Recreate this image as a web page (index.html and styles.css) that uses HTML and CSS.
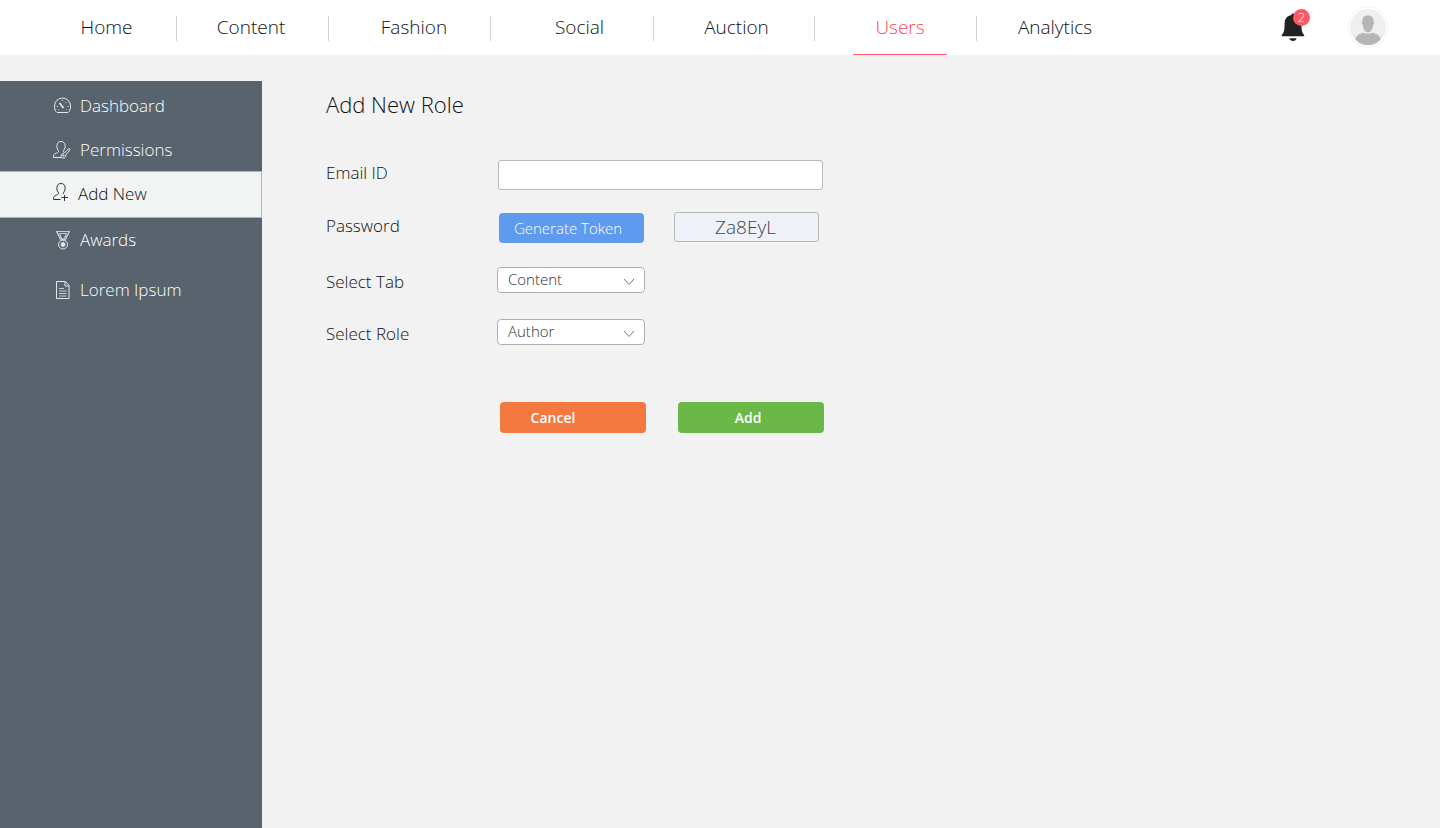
FILE: index.html
```html
<!DOCTYPE html>
<html lang="en">
<head>
<meta charset="utf-8">
<meta name="viewport" content="width=device-width, initial-scale=1">
<title>Add New Role</title>
<link rel="stylesheet" href="styles.css">
</head>
<body>
<header class="topbar">
  <nav class="tabs" aria-label="Main">
    <a class="tab" href="#"><span class="tab-label">Home</span></a>
    <a class="tab tab-back" href="#"><span class="tab-label">Content</span></a>
    <a class="tab tab-shifted" href="#"><span class="tab-label">Fashion</span></a>
    <a class="tab tab-wide" href="#"><span class="tab-label">Social</span></a>
    <a class="tab tab-near" href="#"><span class="tab-label">Auction</span></a>
    <a class="tab tab-shifted tab-active" href="#" aria-current="page"><span class="tab-label">Users</span></a>
    <a class="tab" href="#"><span class="tab-label">Analytics</span></a>
  </nav>
  <div class="account">
    <button class="bell" type="button" aria-label="Notifications">
      <svg width="24" height="30" viewBox="0 0 24 30" fill="#222" aria-hidden="true">
        <path d="M12 1.500c-1 0-1.600.700-1.600 1.600C6.200 3.900 3.600 7 3.600 11.500c0 7-.8 9.500-2.600 11.300-.5.600-.3 1.400.4 1.400h21.200c.7 0 .9-.8.4-1.400-1.800-1.800-2.600-4.300-2.600-11.300 0-4.500-2.600-7.600-6.800-8.400 0-.9-.6-1.600-1.600-1.600z"/>
        <path d="M8.500 26.200h7c-.3 1.700-1.600 2.700-3.500 2.700s-3.200-1-3.500-2.700z"/>
      </svg>
      <span class="badge">2</span>
    </button>
    <button class="avatar" type="button" aria-label="Account">
      <svg width="42" height="42" viewBox="0 0 42 42" aria-hidden="true">
        <circle cx="21" cy="21" r="20.200" fill="#fff" stroke="#f4f4f4"/>
        <circle cx="21" cy="21" r="18" fill="#efefef"/>
        <path d="M15.300 15.500c0-4 2-6 5.700-6s5.700 2 5.700 6c.7.300.4 2.500-.4 3-.5 4.700-2.400 8-5.300 8s-4.800-3.300-5.300-8c-.8-.5-1.100-2.700-.4-3z" fill="#b5b5b5"/>
        <path d="M8.500 33.200c.7-3.600 3.500-5.500 8.300-6.500 2.700 1.500 5.700 1.500 8.400 0 4.800 1 7.600 2.900 8.300 6.500-2.600 3.700-7.100 5.800-12.500 5.800s-9.900-2.100-12.500-5.800z" fill="#b5b5b5"/>
      </svg>
    </button>
  </div>
</header>
<div class="page">
  <aside class="sidebar">
    <a class="side-link" href="#">
      <svg class="side-icon" viewBox="0 0 20 20" aria-hidden="true"><path d="M5 17.500C3 16 2.500 14 2.500 11a8 8 0 0 1 16 0c0 3-.5 5-2.500 6.500z"/><path d="M7.500 8l4 5" stroke-width="1.800"/><path d="M10.500 4.500V6M4.500 11.500H6M15 11.500h1.500M14.500 7l-1 1M6 15l.8-.6M15 15l-.8-.6" stroke-width=".7"/></svg>
      Dashboard
    </a>
    <a class="side-link" href="#">
      <svg class="side-icon" viewBox="0 0 20 20" aria-hidden="true"><path d="M9.500 18.500H1.500c-.2-3 1-3.700 3-4.500 2-.7 2.500-1.500 1.700-2.800C5 9.700 4.800 8.500 4.900 6.500 5 4 6.500 2.500 9 2.500s4 1.500 4.100 4c.1 2-.3 3.300-1.300 4.700-.6 1-.5 1.700.3 2.300"/><path d="M12.300 14l4.200-4.200c.9-.8 2 .2 1.300 1.200L13.700 16c.3 2.200-1.200 3.200-3 3-1.400-.2-2-1.500-1.300-3 .5-1.300 1.500-1.800 2.900-2z"/><circle cx="11.400" cy="16.500" r=".7"/></svg>
      Permissions
    </a>
    <a class="side-link side-active" href="#" aria-current="page">
      <svg class="side-icon" viewBox="0 0 20 20" aria-hidden="true"><path d="M8.500 16.500H1.500c-.2-3 1-3.700 3-4.500 2-.7 2.500-1.500 1.700-2.800C5 7.700 4.800 6.500 4.900 4.500 5 2 6.500.5 9 .5s4 1.500 4.100 4c.1 2-.3 3.300-1.300 4.700-.5.800-.5 1.300-.3 1.800M12.500 12v6M9.500 14.500h6.500"/></svg>
      Add New
    </a>
    <a class="side-link side-awards" href="#">
      <svg class="side-icon" viewBox="0 0 20 20" aria-hidden="true"><path d="M4.500 1.500h13L13.500 10h-5zM7.500 3.500h7L12 9h-2zM4.500 1.500L10 10M17.500 1.500L12 10" stroke-width=".8"/><circle cx="11" cy="14.500" r="4.500"/><circle cx="11" cy="14.500" r="2" fill="currentColor"/></svg>
      Awards
    </a>
    <a class="side-link" href="#">
      <svg class="side-icon" viewBox="0 0 20 20" aria-hidden="true"><path d="M4.500 2.500h9l3.500 4v13H4.500zM13 2.500v4.500h4"/><path d="M7 9.500h5M7 12h7.500M7 14.500h7.500M7 17h7.500" stroke-width=".8"/></svg>
      Lorem Ipsum
    </a>
  </aside>
  <main class="content">
    <h1 class="title">Add New Role</h1>
    <form class="form">
      <div class="row">
        <label class="label label-raised" for="email">Email ID</label>
        <input class="text-box" id="email" type="email">
      </div>
      <div class="row">
        <label class="label label-raised" for="token">Password</label>
        <div class="pair">
          <button class="button button-token" type="button">Generate Token</button>
          <input class="text-box token" id="token" type="text" value="Za8EyL" readonly>
        </div>
      </div>
      <div class="row row-select">
        <label class="label label-lowered" for="tab">Select Tab</label>
        <div class="select">
          <select class="select-box" id="tab"><option>Content</option></select>
          <svg class="chevron" viewBox="0 0 12 8" aria-hidden="true"><path d="M1 1l5 5.500L11 1"/></svg>
        </div>
      </div>
      <div class="row row-select">
        <label class="label label-lowered" for="role">Select Role</label>
        <div class="select">
          <select class="select-box" id="role"><option>Author</option></select>
          <svg class="chevron" viewBox="0 0 12 8" aria-hidden="true"><path d="M1 1l5 5.500L11 1"/></svg>
        </div>
      </div>
      <div class="actions">
        <button class="button button-cancel" type="button">Cancel</button>
        <button class="button button-add" type="submit">Add</button>
      </div>
    </form>
  </main>
</div>
</body>
</html>
```
FILE: styles.css
```css
* { box-sizing: border-box; }

body {
  margin: 0;
  min-height: 100vh;
  display: flex;
  flex-direction: column;
  background: #f2f2f2;
  color: #111;
  font-family: "Open Sans", sans-serif;
  font-weight: 300;
  font-size: 17px;
}

button, input, select { font: inherit; }
a { color: inherit; text-decoration: none; }

.topbar {
  display: flex;
  justify-content: space-between;
  background: #fff;
}

.tabs {
  flex: 0 1 1133px;
  display: grid;
  grid-template-columns: 177fr 152fr 162fr 163fr 161fr 162fr 156fr;
  font-size: 19px;
}

.tab {
  position: relative;
  display: flex;
  justify-content: center;
  height: 55px;
}
.tab:first-child { padding-left: 36px; }
.tab-back { padding-right: 4px; }
.tab-shifted { padding-left: 8px; }
.tab-wide { padding-left: 14px; }
.tab-near { padding-left: 4px; }

.tab:not(:last-child)::after {
  content: "";
  position: absolute;
  right: 0;
  top: 16px;
  height: 25px;
  border-right: 1px solid #d2d2d2;
}

.tab-label {
  padding: 0 20px;
  line-height: 54px;
}

.tab-active .tab-label {
  padding: 0 22px;
  color: #ff4755;
  border-bottom: 1px solid #ff5864;
}

.account {
  display: flex;
  align-items: center;
  gap: 42px;
  padding: 0 51px 2px 0;
}

.bell, .avatar {
  position: relative;
  display: flex;
  padding: 0;
  border: 0;
  background: none;
}

.badge {
  position: absolute;
  top: -3px;
  right: -5px;
  width: 17px;
  height: 17px;
  border-radius: 50%;
  background: #ff5864;
  color: #fff;
  font-size: 13px;
  line-height: 17px;
  text-align: center;
}

.page {
  flex: 1;
  display: flex;
  padding-top: 26px;
}

.sidebar {
  flex: 0 0 262px;
  padding-top: 2px;
  background: #59636d;
  color: #fff;
}

.side-link {
  display: flex;
  align-items: center;
  gap: 8px;
  height: 44px;
  padding-left: 52px;
}

.side-active {
  height: 47px;
  gap: 6px;
  padding-bottom: 3px;
  background: #f2f4f4;
  border: 1px solid #b0b3b5;
  border-left: 0;
  color: #111;
}

.side-awards {
  height: 43px;
  margin-bottom: 6px;
}

.side-icon {
  width: 20px;
  height: 20px;
  fill: none;
  stroke: currentColor;
  stroke-width: 1;
  opacity: 0.85;
}

.content {
  flex: 1;
  padding: 8px 64px;
}

.title {
  margin: 0 0 40px;
  font-size: 22px;
  font-weight: 300;
  line-height: 31px;
}

.form {
  display: flex;
  flex-direction: column;
  gap: 22px;
}

.row {
  display: grid;
  grid-template-columns: 172px auto;
  justify-content: start;
  align-items: center;
}

.row-select {
  grid-template-columns: 171px auto;
}

.label { line-height: 26px; }
.label-raised { padding-bottom: 4px; }
.label-lowered { padding-top: 4px; }

.text-box {
  width: 325px;
  height: 30px;
  border: 1px solid #b8b8b8;
  border-radius: 3px;
  background: #fff;
}

.pair, .actions {
  display: flex;
  gap: 30px;
}

.pair { padding-left: 1px; }

.token {
  width: 145px;
  padding: 0 4px 0 2px;
  background: #eef1f7;
  color: #444;
  font-size: 19px;
  text-align: center;
}

.button {
  width: 146px;
  height: 31px;
  padding: 0 0 1px;
  border: 0;
  border-radius: 4px;
  color: #fff;
  font-size: 14px;
  font-weight: 600;
}

.button-token {
  width: 145px;
  height: 30px;
  margin-top: 1px;
  padding-right: 7px;
  background: #5e9bef;
  font-size: 15px;
  font-weight: 300;
}

.button-cancel {
  padding-right: 40px;
  background: #f47940;
}

.button-add {
  padding-right: 6px;
  background: #6bb848;
}

.select {
  position: relative;
  width: 148px;
}

.select-box {
  display: block;
  appearance: none;
  width: 100%;
  height: 26px;
  padding: 0 10px 2px;
  border: 1px solid #b0b0b0;
  border-radius: 4px;
  background: #fff;
  color: #333;
  font-size: 15px;
  line-height: 22px;
}

.chevron {
  position: absolute;
  right: 10px;
  top: 11px;
  width: 12px;
  height: 8px;
  fill: none;
  stroke: #777;
  pointer-events: none;
}

.actions {
  gap: 32px;
  padding: 33px 0 0 174px;
}
```
